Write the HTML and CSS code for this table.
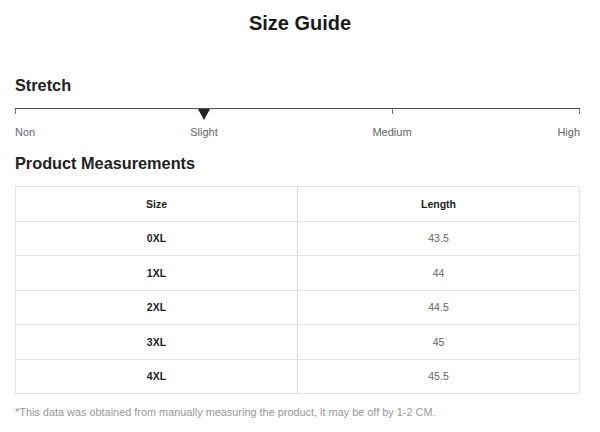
FILE: index.html
```html
<!DOCTYPE html>
<html>
<head>
<meta charset="utf-8">
<link rel="stylesheet" href="styles.css">
</head>
<body>
<div class="page">
  <h1 class="title">Size Guide</h1>
  <h2 class="heading stretch-heading">Stretch</h2>
  <div class="scale">
    <div class="track">
      <span class="tick tick-start"></span>
      <span class="tick tick-mid"></span>
      <span class="tick tick-end"></span>
      <span class="marker"></span>
    </div>
    <div class="labels">
      <span class="lbl lbl-non">Non</span>
      <span class="lbl lbl-slight">Slight</span>
      <span class="lbl lbl-medium">Medium</span>
      <span class="lbl lbl-high">High</span>
    </div>
  </div>
  <h2 class="heading measure-heading">Product Measurements</h2>
  <table class="sizes">
    <thead>
      <tr><th>Size</th><th>Length</th></tr>
    </thead>
    <tbody>
      <tr><td class="size">0XL</td><td class="val">43.5</td></tr>
      <tr><td class="size">1XL</td><td class="val">44</td></tr>
      <tr><td class="size">2XL</td><td class="val">44.5</td></tr>
      <tr><td class="size">3XL</td><td class="val">45</td></tr>
      <tr><td class="size">4XL</td><td class="val">45.5</td></tr>
    </tbody>
  </table>
  <p class="note">*This data was obtained from manually measuring the product, it may be off by 1-2 CM.</p>
</div>
</body>
</html>
```

FILE: styles.css
```css
html, body {
  margin: 0;
  padding: 0;
  background: #fff;
}
body {
  font-family: "Liberation Sans", Arial, sans-serif;
  color: #222;
}
.page {
  padding: 0 20px 0 15px;
}
.title {
  margin: 11px 0 0;
  font-size: 20px;
  line-height: 24px;
  font-weight: bold;
  text-align: center;
  color: #1a1a1a;
  padding-left: 5px;
}
.heading {
  margin: 0;
  font-size: 16.3px;
  line-height: 20px;
  font-weight: bold;
  color: #222;
}
.stretch-heading {
  margin-top: 40px;
}
.scale {
  margin-top: 13px;
}
.track {
  position: relative;
  height: 16px;
  border-top: 1px solid #555;
}
.tick {
  position: absolute;
  top: 0;
  width: 1px;
  height: 5px;
  background: #777;
}
.tick-start { left: 0; }
.tick-mid { left: 377px; }
.tick-end { right: 0; }
.marker {
  position: absolute;
  top: 0;
  left: 183px;
  width: 0;
  height: 0;
  border-left: 6px solid transparent;
  border-right: 6px solid transparent;
  border-top: 11px solid #222;
}
.labels {
  position: relative;
  height: 14px;
  font-size: 11px;
  line-height: 14px;
  color: #666;
}
.lbl {
  position: absolute;
  top: 0;
}
.lbl-non { left: 0; }
.lbl-slight { left: 189px; transform: translateX(-50%); }
.lbl-medium { left: 377px; transform: translateX(-50%); }
.lbl-high { right: 0; }
.measure-heading {
  margin-top: 14px;
}
.sizes {
  margin-top: 13px;
  width: 565px;
  border-collapse: collapse;
  table-layout: fixed;
  font-size: 10.5px;
}
.sizes th, .sizes td {
  border: 1px solid #e6e6e6;
  text-align: center;
  height: 33.5px;
  padding: 0;
}
.sizes th:first-child, .sizes td:first-child {
  border-right: 1px solid #d9d9d9;
}
.sizes th {
  font-weight: bold;
  color: #222;
}
.size {
  font-weight: bold;
  color: #222;
}
.val {
  color: #666;
}
.note {
  margin: 10px 0 0;
  font-size: 10.9px;
  line-height: 16px;
  color: #999;
}
```
